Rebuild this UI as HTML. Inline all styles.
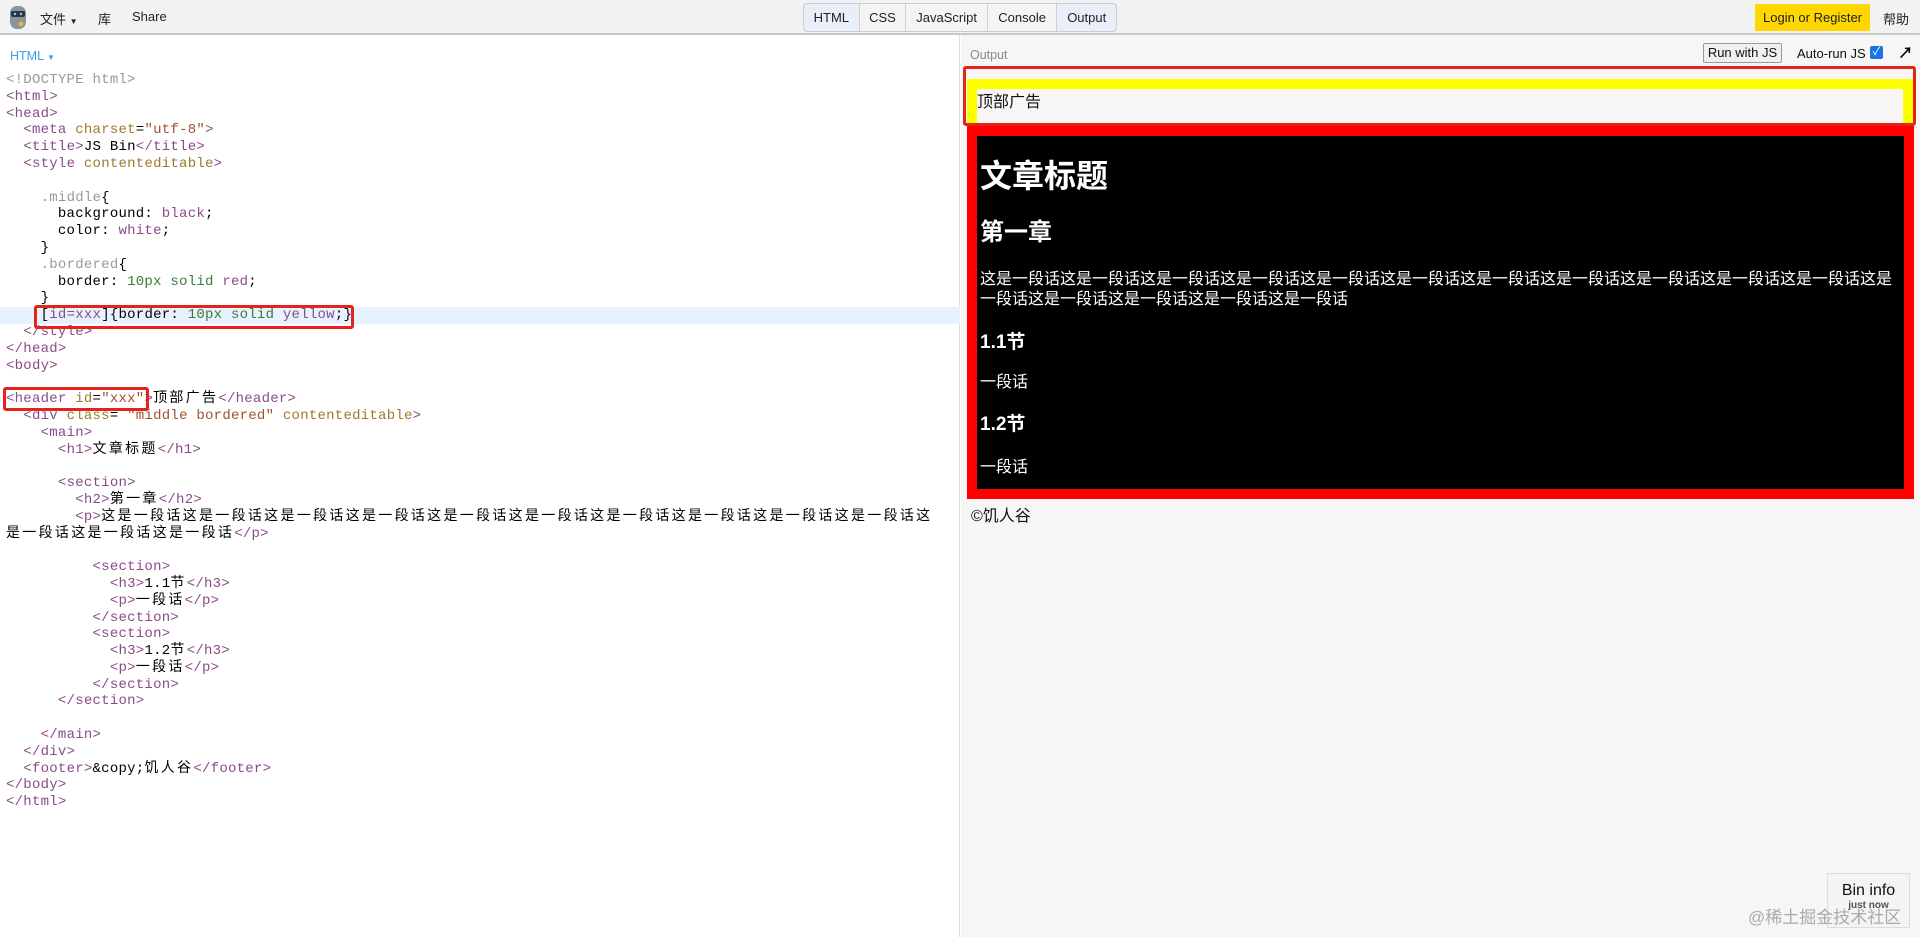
<!DOCTYPE html>
<html><head><meta charset="utf-8">
<style>
*{box-sizing:border-box;margin:0;padding:0}
body{width:1920px;height:937px;overflow:hidden;background:#fff;font-family:"Liberation Sans","Noto Sans CJK SC",sans-serif;position:relative}
#top{position:absolute;left:0;top:0;width:1920px;height:35px;background:#f2f2f2;border-bottom:2px solid #c8c8c8}
.t{position:absolute;top:9px;font-size:13px;color:#222}
#tabs{position:absolute;left:803px;top:3px;height:29px;width:314px;border:1px solid #c8ccd3;border-radius:4px;display:flex;background:#f4f4f4;overflow:hidden}
#tabs div{height:100%;font-size:13px;line-height:27px;text-align:center;border-right:1px solid #d0d0d0;color:#222}
#tabs .a{background:#e8eff9}
#left{position:absolute;left:0;top:35px;width:960px;height:902px;background:#fff;border-right:1px solid #ddd}
#right{position:absolute;left:961px;top:35px;width:959px;height:902px;background:#f6f6f6}
pre{position:absolute;left:6px;top:37px;font-family:"Liberation Mono","Noto Sans CJK SC",monospace;font-size:14px;line-height:16.8px;color:#000;letter-spacing:0.25px}
pre .c{letter-spacing:2.3px}
.g{color:#999}.k{color:#8a4a8a}.at{color:#a0782a}.s{color:#a0522d}.v{color:#8a4a8a}.n{color:#3a7a3a}
.hl{position:absolute;left:0;top:272px;width:960px;height:17px;background:#e8f2ff}
.rb{position:absolute;border:3px solid #e3241c;border-radius:3px}
#mid div{line-height:1.15}
</style></head><body>
<div id="top">
 <svg style="position:absolute;left:8px;top:5px" width="20" height="25" viewBox="0 0 20 25"><rect x="2" y="1" width="16" height="23" rx="7" fill="#8a949c"/><rect x="3" y="6" width="14" height="6" rx="2" fill="#2b3640"/><circle cx="7" cy="9" r="1.2" fill="#9cf"/><circle cx="13" cy="9" r="1.2" fill="#9cf"/><circle cx="13" cy="19" r="2.2" fill="#f0c020"/></svg>
 <span class="t" style="left:40px">文件 <span style="font-size:8px">▼</span></span>
 <span class="t" style="left:98px">库</span>
 <span class="t" style="left:132px">Share</span>
 <div id="tabs"><div class="a" style="width:56px">HTML</div><div style="width:47px">CSS</div><div style="width:82px">JavaScript</div><div style="width:70px">Console</div><div class="a" style="width:59px;border-right:0">Output</div></div>
 <div style="position:absolute;left:1755px;top:4px;width:115px;height:27px;background:#ffd700;font-size:13px;line-height:27px;text-align:center;color:#222">Login or Register</div>
 <span class="t" style="left:1883px">帮助</span>
</div>
<div id="left">
 <div style="position:absolute;left:10px;top:14px;font-size:12.5px;color:#3aa0e6">HTML <span style="font-size:8px">▼</span></div>
 <div class="hl"></div>
<pre><span class="g">&lt;!DOCTYPE html&gt;</span>
<span class="k">&lt;html&gt;</span>
<span class="k">&lt;head&gt;</span>
  <span class="k">&lt;meta</span> <span class="at">charset</span>=<span class="s">"utf-8"</span><span class="k">&gt;</span>
  <span class="k">&lt;title&gt;</span>JS Bin<span class="k">&lt;/title&gt;</span>
  <span class="k">&lt;style</span> <span class="at">contenteditable</span><span class="k">&gt;</span>

    <span class="g">.middle</span>{
      background: <span class="v">black</span>;
      color: <span class="v">white</span>;
    }
    <span class="g">.bordered</span>{
      border: <span class="n">10px</span> <span class="n">solid</span> <span class="v">red</span>;
    }
    [<span class="v">id=xxx</span>]{border: <span class="n">10px</span> <span class="n">solid</span> <span class="v">yellow</span>;}
  <span class="k">&lt;/style&gt;</span>
<span class="k">&lt;/head&gt;</span>
<span class="k">&lt;body&gt;</span>

<span class="k">&lt;header</span> <span class="at">id</span>=<span class="s">"xxx"</span><span class="k">&gt;</span><span class="c">顶部广告</span><span class="k">&lt;/header&gt;</span>
  <span class="k">&lt;div</span> <span class="at">class</span>= <span class="s">"middle bordered"</span> <span class="at">contenteditable</span><span class="k">&gt;</span>
    <span class="k">&lt;main&gt;</span>
      <span class="k">&lt;h1&gt;</span><span class="c">文章标题</span><span class="k">&lt;/h1&gt;</span>

      <span class="k">&lt;section&gt;</span>
        <span class="k">&lt;h2&gt;</span><span class="c">第一章</span><span class="k">&lt;/h2&gt;</span>
        <span class="k">&lt;p&gt;</span><span class="c">这是一段话这是一段话这是一段话这是一段话这是一段话这是一段话这是一段话这是一段话这是一段话这是一段话这</span>
<span class="c">是一段话这是一段话这是一段话</span><span class="k">&lt;/p&gt;</span>

          <span class="k">&lt;section&gt;</span>
            <span class="k">&lt;h3&gt;</span>1.1<span class="c">节</span><span class="k">&lt;/h3&gt;</span>
            <span class="k">&lt;p&gt;</span><span class="c">一段话</span><span class="k">&lt;/p&gt;</span>
          <span class="k">&lt;/section&gt;</span>
          <span class="k">&lt;section&gt;</span>
            <span class="k">&lt;h3&gt;</span>1.2<span class="c">节</span><span class="k">&lt;/h3&gt;</span>
            <span class="k">&lt;p&gt;</span><span class="c">一段话</span><span class="k">&lt;/p&gt;</span>
          <span class="k">&lt;/section&gt;</span>
      <span class="k">&lt;/section&gt;</span>

    <span class="k">&lt;/main&gt;</span>
  <span class="k">&lt;/div&gt;</span>
  <span class="k">&lt;footer&gt;</span>&amp;copy;<span class="c">饥人谷</span><span class="k">&lt;/footer&gt;</span>
<span class="k">&lt;/body&gt;</span>
<span class="k">&lt;/html&gt;</span></pre>
 <div class="rb" style="left:34px;top:270px;width:320px;height:24px"></div>
 <div class="rb" style="left:3px;top:352px;width:146px;height:24px"></div>
</div>
<div id="right">
 <div style="position:absolute;left:9px;top:13px;font-size:12.5px;color:#888">Output</div>
 <div style="position:absolute;left:742px;top:8px;width:79px;height:20px;border:1px solid #999;background:#f0f0f0;font-size:13px;line-height:18px;text-align:center;color:#111;border-radius:2px">Run with JS</div>
 <div style="position:absolute;left:836px;top:11px;font-size:13px;color:#111">Auto-run JS</div>
 <div style="position:absolute;left:909px;top:11px;width:13px;height:13px;background:#1a73e8;border-radius:2px;color:#fff;font-size:11px;line-height:13px;text-align:center">✓</div>
 <div style="position:absolute;left:937px;top:7px;font-size:15px;font-weight:bold;color:#000">↗</div>
 <div style="position:absolute;left:6px;top:44px;width:946px;height:57px;border:10px solid #ffff00"><div style="position:absolute;left:0;top:0;width:100%;height:100%;background:#f6f6f6"></div><div style="position:absolute;left:0;top:5px;font-size:16px;line-height:1.1;color:#111">顶部广告</div></div>
 <div class="rb" style="left:2px;top:31px;width:953px;height:60px"></div>
 <div id="mid" style="position:absolute;left:6px;top:91px;width:947px;height:373px;border:10px solid #ff0000;background:#000;color:#fff">
  <div style="position:absolute;left:3px;top:22px;font-size:32px;font-weight:bold">文章标题</div>
  <div style="position:absolute;left:3px;top:83px;font-size:24px;font-weight:bold">第一章</div>
  <div style="position:absolute;left:3px;top:134px;width:920px;font-size:16px;line-height:19.5px!important">这是一段话这是一段话这是一段话这是一段话这是一段话这是一段话这是一段话这是一段话这是一段话这是一段话这是一段话这是一段话这是一段话这是一段话这是一段话这是一段话</div>
  <div style="position:absolute;left:3px;top:196px;font-size:19px;font-weight:bold">1.1节</div>
  <div style="position:absolute;left:3px;top:238px;font-size:16px">一段话</div>
  <div style="position:absolute;left:3px;top:278px;font-size:19px;font-weight:bold">1.2节</div>
  <div style="position:absolute;left:3px;top:323px;font-size:16px">一段话</div>
 </div>
 <div style="position:absolute;left:10px;top:467px;font-size:16px;color:#111">©饥人谷</div>
 <div style="position:absolute;left:866px;top:838px;width:83px;height:55px;background:#f4f4f4;border:1px solid #ddd;font-size:16px;color:#111;text-align:center;padding-top:8px">Bin info<div style="font-size:10px;color:#555;font-weight:bold">just now</div></div>
 <div style="position:absolute;left:787px;top:868px;font-size:17px;color:#aaa">@稀土掘金技术社区</div>
</div>
</body></html>
